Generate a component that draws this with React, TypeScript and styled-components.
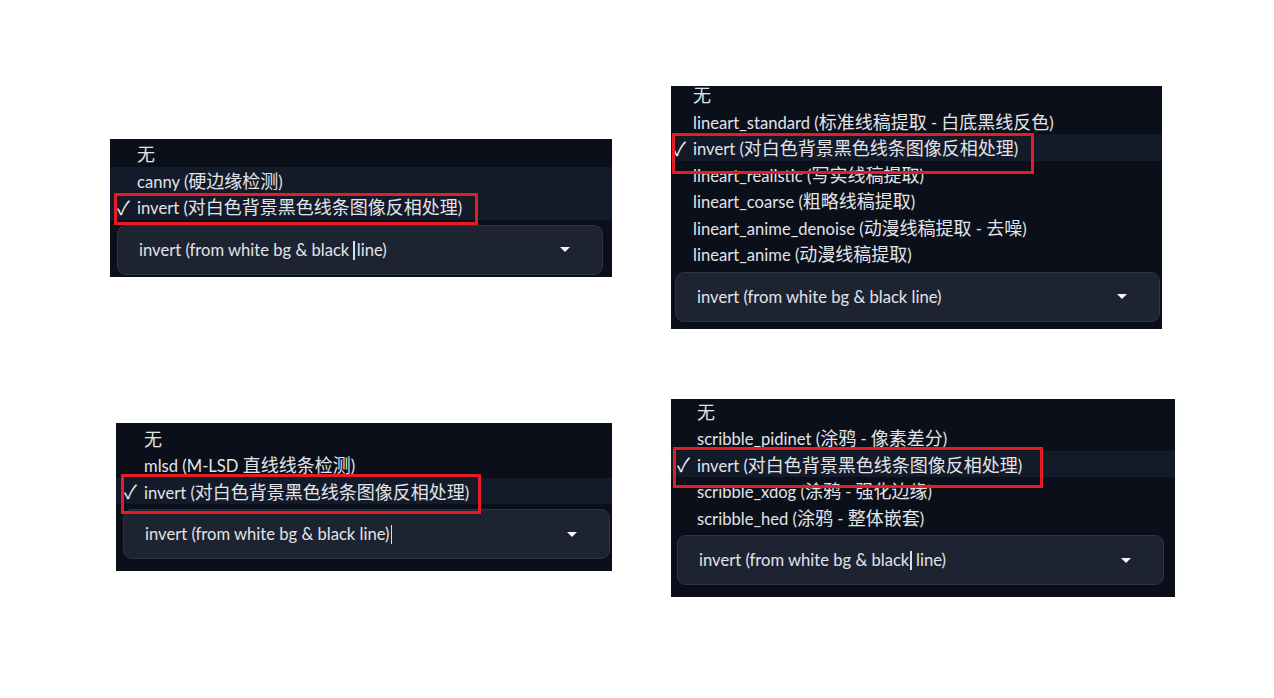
import React from "react";
import styled, { createGlobalStyle } from "styled-components";

const GlobalStyle = createGlobalStyle`
  html, body {
    margin: 0;
    padding: 0;
    background: #ffffff;
  }
  body {
    font-family: "Lato", "Noto Sans CJK SC", sans-serif;
  }
`;

type Option = { label: string; light?: boolean; checked?: boolean };

type Shot = {
  width: number;
  inset: number;
  listTop: number;
  selLeft: number;
  selRight: number;
  bottom: number;
  options: Option[];
  value: React.ReactNode;
  mark: { left: number; top: number; width: number; height: number };
};

const Page = styled.div`
  width: 1274px;
  height: 698px;
  display: flex;
  background: #ffffff;
`;

const Column = styled.div<{ $left: number; $top: number; $gap: number }>`
  display: flex;
  flex-direction: column;
  align-items: flex-start;
  margin-left: ${(p) => p.$left}px;
  padding-top: ${(p) => p.$top}px;
  gap: ${(p) => p.$gap}px;
`;

const Panel = styled.div<{ $w: number; $offset: number; $bottom: number }>`
  position: relative;
  width: ${(p) => p.$w}px;
  margin-left: ${(p) => p.$offset}px;
  padding-bottom: ${(p) => p.$bottom}px;
  background: #0b0f19;
  overflow: hidden;
  color: #e2e4e8;
  font-size: 16.6px;
`;

const List = styled.ul<{ $top: number }>`
  list-style: none;
  margin: ${(p) => p.$top}px 0 5px 0;
  padding: 0;
`;

const Row = styled.li<{ $light?: boolean; $inset: number }>`
  display: grid;
  grid-template-columns: 20px 1fr;
  align-items: center;
  height: 26.5px;
  padding-left: ${(p) => p.$inset}px;
  background: ${(p) => (p.$light ? "#131a29" : "transparent")};
  white-space: nowrap;
`;

const Check = styled.span`
  font-family: "Noto Sans CJK SC", "DejaVu Sans", sans-serif;
  font-size: 19px;
  line-height: 1;
  color: #eef0f3;
`;

const Cjk = styled.span`
  font-family: "Noto Sans CJK SC", sans-serif;
  font-size: 18px;
`;

const Select = styled.div<{ $l: number; $r: number }>`
  display: flex;
  align-items: center;
  justify-content: space-between;
  height: 50px;
  box-sizing: border-box;
  margin: 0 ${(p) => p.$r}px 0 ${(p) => p.$l}px;
  padding: 0 32px 0 21px;
  background: #1e2331;
  border: 1px solid #2c3445;
  border-radius: 9px;
  white-space: nowrap;
`;

const Caret = styled.span`
  display: inline-block;
  width: 0;
  height: 0;
  border-left: 5px solid transparent;
  border-right: 5px solid transparent;
  border-top: 5px solid #f4f5f7;
`;

const TextCursor = styled.span<{ $l: number; $r: number }>`
  display: inline-block;
  width: 1.5px;
  height: 19px;
  vertical-align: -4px;
  margin: 0 ${(p) => p.$r}px 0 ${(p) => p.$l}px;
  background: #cfe0ff;
`;

const Mark = styled.div`
  position: absolute;
  box-sizing: border-box;
  border: 3px solid #e61c24;
`;

const cjkRun = /([\u3400-\u9fff]+)/;

const Label = ({ text }: { text: string }) => (
  <span>
    {text.split(cjkRun).map((part, i) =>
      cjkRun.test(part) ? <Cjk key={i}>{part}</Cjk> : part
    )}
  </span>
);

const shots: Shot[] = [
  {
    width: 502,
    inset: 7,
    listTop: 1,
    selLeft: 7,
    selRight: 9,
    bottom: 2,
    options: [
      { label: "无" },
      { label: "canny (硬边缘检测)", light: true },
      { label: "invert (对白色背景黑色线条图像反相处理)", light: true, checked: true },
    ],
    value: (
      <>
        invert (from white bg &amp; black
        <TextCursor $l={4} $r={2} />
        line)
      </>
    ),
    mark: { left: 4, top: 54, width: 364, height: 32 },
  },
  {
    width: 496,
    inset: 8,
    listTop: 2,
    selLeft: 7,
    selRight: 2,
    bottom: 12,
    options: [
      { label: "无" },
      { label: "mlsd (M-LSD 直线线条检测)" },
      { label: "invert (对白色背景黑色线条图像反相处理)", light: true, checked: true },
    ],
    value: (
      <>
        invert (from white bg &amp; black line)
        <TextCursor $l={1} $r={0} />
      </>
    ),
    mark: { left: 5, top: 51, width: 360, height: 40 },
  },
  {
    width: 491,
    inset: 2,
    listTop: -5,
    selLeft: 4,
    selRight: 2,
    bottom: 7,
    options: [
      { label: "无" },
      { label: "lineart_standard (标准线稿提取 - 白底黑线反色)" },
      { label: "invert (对白色背景黑色线条图像反相处理)", light: true, checked: true },
      { label: "lineart_realistic (写实线稿提取)" },
      { label: "lineart_coarse (粗略线稿提取)" },
      { label: "lineart_anime_denoise (动漫线稿提取 - 去噪)" },
      { label: "lineart_anime (动漫线稿提取)" },
    ],
    value: <>invert (from white bg &amp; black line)</>,
    mark: { left: 1, top: 47, width: 362, height: 41 },
  },
  {
    width: 504,
    inset: 6,
    listTop: -1,
    selLeft: 6,
    selRight: 11,
    bottom: 12,
    options: [
      { label: "无" },
      { label: "scribble_pidinet (涂鸦 - 像素差分)" },
      { label: "invert (对白色背景黑色线条图像反相处理)", light: true, checked: true },
      { label: "scribble_xdog (涂鸦 - 强化边缘)" },
      { label: "scribble_hed (涂鸦 - 整体嵌套)" },
    ],
    value: (
      <>
        invert (from white bg &amp; black
        <TextCursor $l={1} $r={0} /> line)
      </>
    ),
    mark: { left: 2, top: 48, width: 370, height: 41 },
  },
];

const Screenshot = ({ shot, offset }: { shot: Shot; offset: number }) => (
  <Panel $w={shot.width} $offset={offset} $bottom={shot.bottom}>
    <List $top={shot.listTop}>
      {shot.options.map((o) => (
        <Row key={o.label} $light={o.light} $inset={shot.inset}>
          <Check>{o.checked ? "✓" : ""}</Check>
          <Label text={o.label} />
        </Row>
      ))}
    </List>
    <Select $l={shot.selLeft} $r={shot.selRight}>
      <span>{shot.value}</span>
      <Caret />
    </Select>
    <Mark
      style={{
        left: shot.mark.left,
        top: shot.mark.top,
        width: shot.mark.width,
        height: shot.mark.height,
      }}
    />
  </Panel>
);

export default function App() {
  return (
    <>
      <GlobalStyle />
      <Page>
        <Column $left={110} $top={139} $gap={146}>
          <Screenshot shot={shots[0]} offset={0} />
          <Screenshot shot={shots[1]} offset={6} />
        </Column>
        <Column $left={59} $top={86} $gap={70}>
          <Screenshot shot={shots[2]} offset={0} />
          <Screenshot shot={shots[3]} offset={0} />
        </Column>
      </Page>
    </>
  );
}
